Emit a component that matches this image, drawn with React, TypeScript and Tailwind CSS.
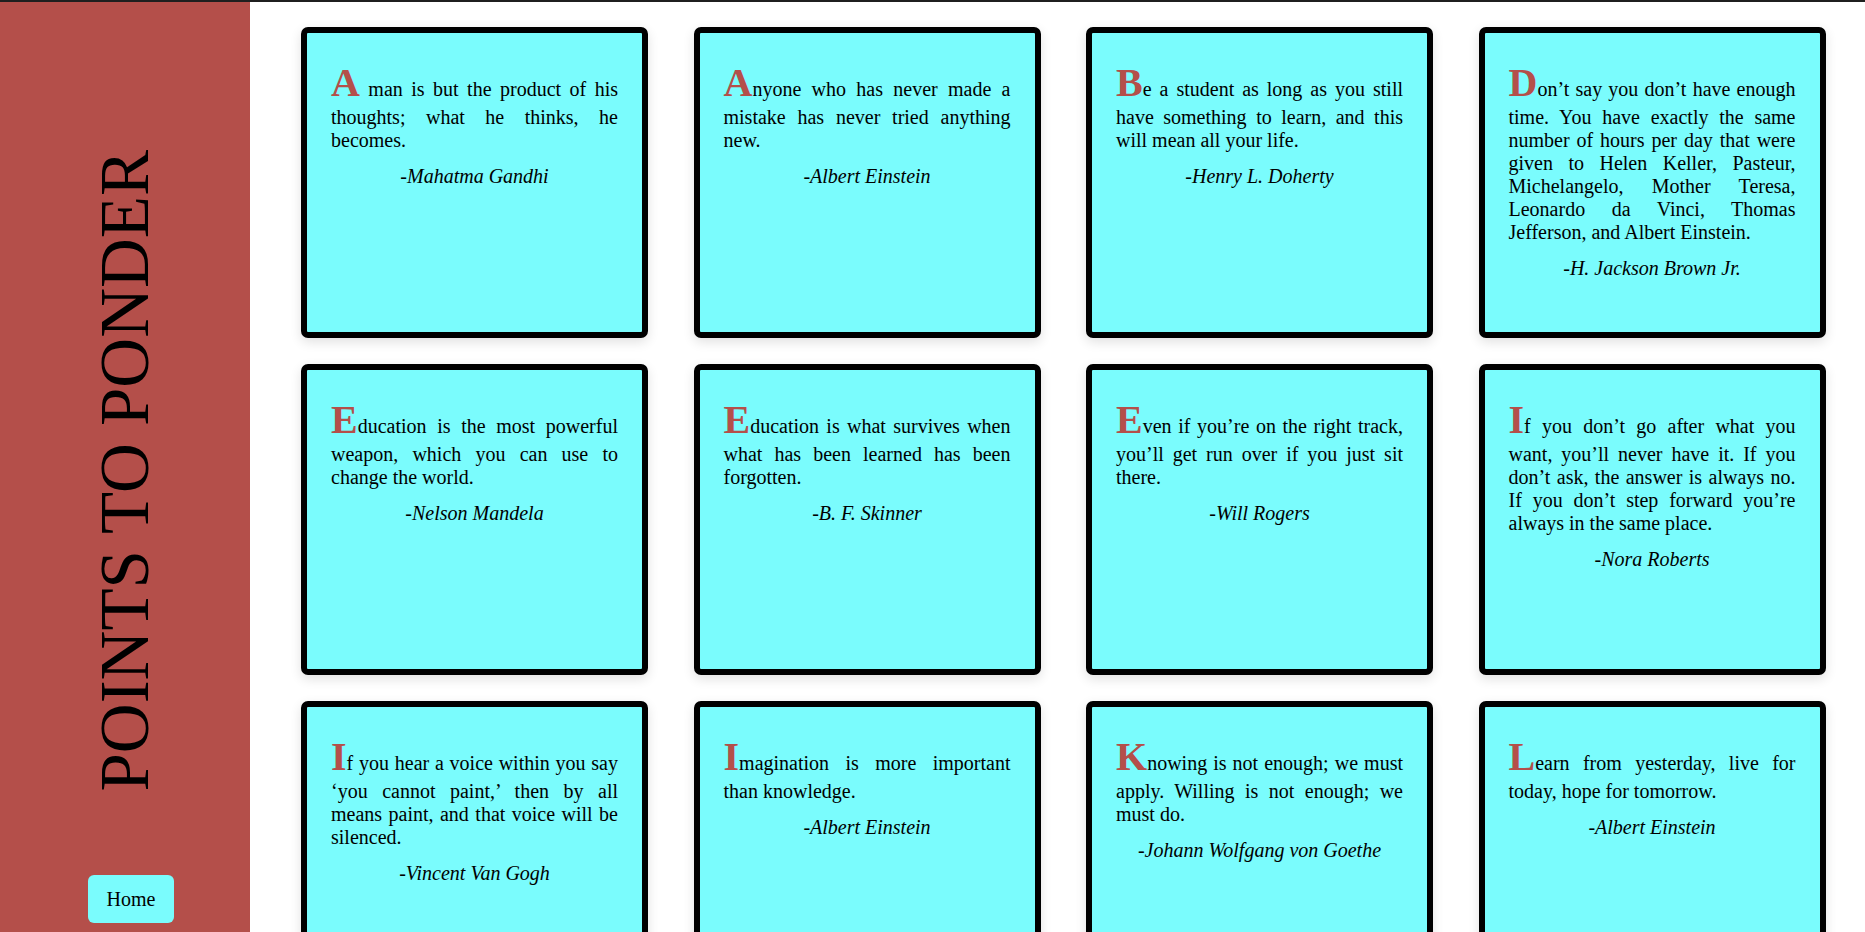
import React from 'react';

type Quote = {
  first: string;
  rest: string;
  author: string;
};

const quotes: Quote[] = [
  { first: 'A', rest: ' man is but the product of his thoughts; what he thinks, he becomes.', author: '-Mahatma Gandhi' },
  { first: 'A', rest: 'nyone who has never made a mistake has never tried anything new.', author: '-Albert Einstein' },
  { first: 'B', rest: 'e a student as long as you still have something to learn, and this will mean all your life.', author: '-Henry L. Doherty' },
  {
    first: 'D',
    rest: 'on’t say you don’t have enough time. You have exactly the same number of hours per day that were given to Helen Keller, Pasteur, Michelangelo, Mother Teresa, Leonardo da Vinci, Thomas Jefferson, and Albert Einstein.',
    author: '-H. Jackson Brown Jr.',
  },
  { first: 'E', rest: 'ducation is the most powerful weapon, which you can use to change the world.', author: '-Nelson Mandela' },
  { first: 'E', rest: 'ducation is what survives when what has been learned has been forgotten.', author: '-B. F. Skinner' },
  { first: 'E', rest: 'ven if you’re on the right track, you’ll get run over if you just sit there.', author: '-Will Rogers' },
  {
    first: 'I',
    rest: 'f you don’t go after what you want, you’ll never have it. If you don’t ask, the answer is always no. If you don’t step forward you’re always in the same place.',
    author: '-Nora Roberts',
  },
  { first: 'I', rest: 'f you hear a voice within you say ‘you cannot paint,’ then by all means paint, and that voice will be silenced.', author: '-Vincent Van Gogh' },
  { first: 'I', rest: 'magination is more important than knowledge.', author: '-Albert Einstein' },
  { first: 'K', rest: 'nowing is not enough; we must apply. Willing is not enough; we must do.', author: '-Johann Wolfgang von Goethe' },
  { first: 'L', rest: 'earn from yesterday, live for today, hope for tomorrow.', author: '-Albert Einstein' },
];

export default function App() {
  return (
    <div className="flex flex-col h-screen font-['Liberation_Serif','Times_New_Roman',serif] text-black">
      <div className="h-[2px] bg-[#1f1f1f] shrink-0"></div>
      <div className="flex flex-1 min-h-0">
        <Sidebar />
        <main className="flex-1 overflow-y-scroll [&::-webkit-scrollbar]:w-[15px] [&::-webkit-scrollbar-track]:bg-white [&::-webkit-scrollbar-thumb]:bg-[#d0d6dc] [&::-webkit-scrollbar-thumb]:bg-clip-padding [&::-webkit-scrollbar-thumb]:[border-left:6px_solid_transparent] [&::-webkit-scrollbar-thumb]:[border-top:18px_solid_transparent] [&::-webkit-scrollbar-thumb]:rounded-[4px]">
          <div className="grid grid-cols-[repeat(4,347px)] gap-x-[45.5px] gap-y-[26px] pl-[51px] pt-[25px] pb-[40px]">
            {quotes.map((q, i) => (
              <QuoteCard key={i} quote={q} />
            ))}
          </div>
        </main>
      </div>
    </div>
  );
}

function Sidebar() {
  return (
    <aside className="w-[250px] shrink-0 bg-[#b44f4a] flex flex-col items-center">
      <div className="flex-1 flex items-center justify-center pt-[64px]">
        <h1 className="[writing-mode:vertical-rl] rotate-180 whitespace-nowrap text-[69px] leading-none font-normal">
          POINTS TO PONDER
        </h1>
      </div>
      <button className="ml-[12px] mb-[9px] h-[48px] px-[19px] rounded-[6px] bg-[#7afcfd] text-[20px] leading-none">
        Home
      </button>
    </aside>
  );
}

function QuoteCard({ quote }: { quote: Quote }) {
  return (
    <div className="w-[347px] h-[311px] border-[6px] border-black rounded-[7px] bg-[#7afcfd] px-[24px] pt-[26px] shadow-[0_4px_12px_rgba(0,0,0,0.12)]">
      <p className="text-[20px] leading-[normal] text-justify">
        <span className="text-[40px] font-bold text-[#b44f4a]">{quote.first}</span>
        {quote.rest}
      </p>
      <p className="mt-[13px] text-[20px] leading-[normal] italic text-center">{quote.author}</p>
    </div>
  );
}
